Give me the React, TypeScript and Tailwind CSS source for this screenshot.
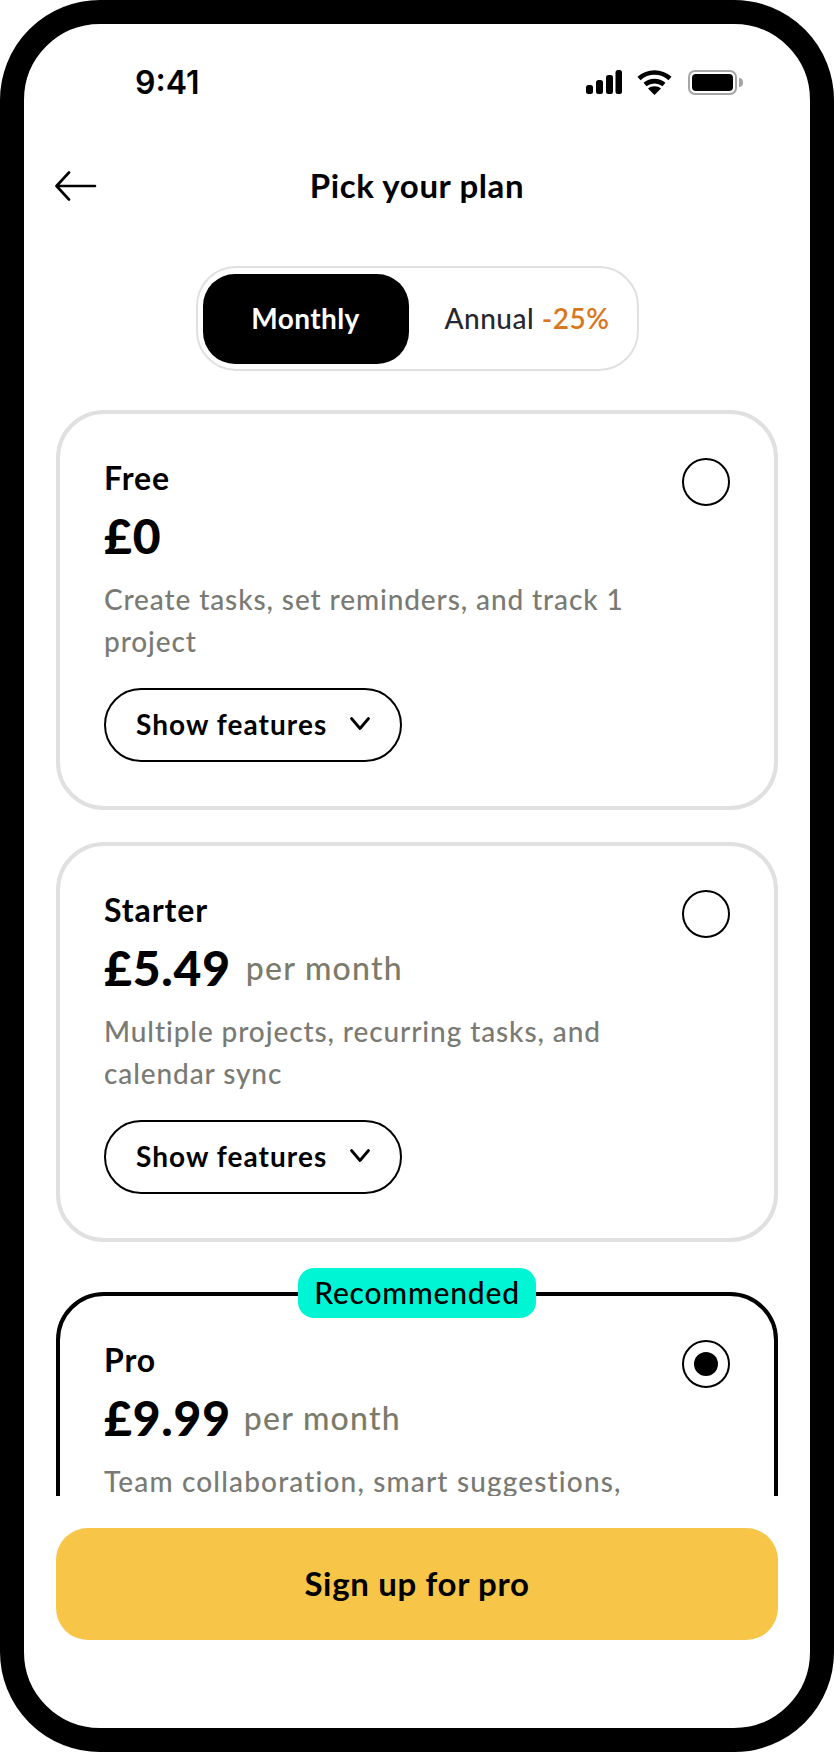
import React from "react";

const font = "font-['Lato','Open_Sans',sans-serif]";

function Radio({ selected }: { selected?: boolean }) {
    return (
        <div className="flex h-12 w-12 shrink-0 items-center justify-center rounded-full border-2 border-black">
            {selected && <div className="h-6 w-6 rounded-full bg-black" />}
        </div>
    );
}

function Chevron() {
    return (
        <svg width="22" height="16" viewBox="0 0 22 16" fill="none" stroke="black" strokeWidth="2.8" strokeLinecap="round" strokeLinejoin="round">
            <path d="M2.500 2.500l8.500 10 8.500-10" />
        </svg>
    );
}

type PlanProps = {
    name: string;
    price: string;
    period?: string;
    desc: string[];
    selected?: boolean;
    badge?: boolean;
    periodGap?: string;
    descTracking?: string;
};

function Plan({ name, price, period, desc, selected, badge, periodGap, descTracking }: PlanProps) {
    return (
        <div className={`relative h-[400px] shrink-0 rounded-[48px] border-4 pl-11 pr-11 pt-[46px] ${selected ? "border-black" : "border-[#e0e0e0]"}`}>
            {badge && (
                <div className="absolute left-[238px] top-[-28px] flex h-[50px] w-[238px] items-center justify-center rounded-2xl bg-[#00f5d4] pb-[2px] text-[30px] font-medium tracking-[0.8px] text-black">
                    Recommended
                </div>
            )}
            <div className="flex items-start justify-between">
                <div>
                    <div className="h-9 text-[32px] font-bold leading-9 tracking-[0.9px] text-black">{name}</div>
                    <div className="mt-[10px] flex h-[60px] items-center">
                        <span className="text-[48px] font-black leading-[60px] tracking-[0.8px] text-black">{price}</span>
                        {period && <span className={`${periodGap ?? "ml-[15px]"} text-[32px] font-medium tracking-[1.25px] text-[#7b7b6b]`}>{period}</span>}
                    </div>
                </div>
                <div className="-mt-[2px]">
                    <Radio selected={selected} />
                </div>
            </div>
            <div className={`mt-3 text-[28px] font-medium leading-[42px] ${descTracking ?? "tracking-[0.9px]"} text-[#7a7a74]`}>
                {desc.map((line) => (
                    <div key={line} className="whitespace-nowrap">{line}</div>
                ))}
            </div>
            <button className="mt-[26px] flex h-[74px] w-[298px] items-center gap-[22px] rounded-full border-2 border-black pb-[2px] pl-[30px] text-[28px] font-bold tracking-[1.05px] text-black">
                Show features
                <Chevron />
            </button>
        </div>
    );
}

export default function App() {
    return (
        <div className={`${font} h-[1752px] w-[834px] bg-white`}>
            <div className="flex h-full w-full flex-col overflow-hidden rounded-[100px] border-[24px] border-black bg-white">
                <div className="flex h-[1472px] shrink-0 flex-col overflow-hidden">
                    {/* status bar */}
                    <div className="mt-9 flex h-11 shrink-0 items-center justify-between pl-[111px] pr-[67px]">
                        <span className="pt-[2px] font-['Inter',sans-serif] text-[32px] font-semibold leading-none text-black">9:41</span>
                        <div className="flex items-center">
                            <svg width="36" height="24" viewBox="0 0 36 24" fill="black">
                                <rect x="0" y="15" width="7" height="9" rx="2.5" />
                                <rect x="10" y="10" width="7" height="14" rx="2.5" />
                                <rect x="20" y="5" width="7" height="19" rx="2.5" />
                                <rect x="29.5" y="0" width="6.5" height="24" rx="2.5" />
                            </svg>
                            <svg className="ml-[15px]" width="35" height="25" viewBox="0 0 35 25" fill="none" stroke="black" strokeWidth="4.6">
                                <path d="M2 8.500c9-8 22-8 31 0" />
                                <path d="M8 14.500c5.500-4.500 13.500-4.500 19 0" />
                                <path d="M17.500 25l-6.500-6.500c3.500-3 9.500-3 13 0z" fill="black" stroke="none" />
                            </svg>
                            <div className="ml-4 flex items-center">
                                <div className="h-[25px] w-[49px] rounded-[7px] border-2 border-[#a6a6a6] p-[2px]">
                                    <div className="h-full w-full rounded-[4px] bg-black" />
                                </div>
                                <div className="ml-[2px] h-[9px] w-1 rounded-r-full bg-[#a6a6a6]" />
                            </div>
                        </div>
                    </div>

                    {/* header */}
                    <div className="relative mt-[58px] flex h-12 shrink-0 items-center justify-center">
                        <svg className="absolute left-[31px] top-[9px]" width="42" height="30" viewBox="0 0 42 30" fill="none" stroke="black" strokeWidth="2.6" strokeLinecap="round" strokeLinejoin="round">
                            <path d="M40 15H2M14 1.500L1.500 15 14 28.500" />
                        </svg>
                        <h1 className="text-[33px] font-bold tracking-[0.6px] text-black">Pick your plan</h1>
                    </div>

                    {/* billing toggle */}
                    <div className="mt-[56px] flex shrink-0 justify-center">
                        <div className="flex h-[105px] w-[443px] items-center rounded-[40px] border-2 border-[#e0e0e0] pl-[5px]">
                            <div className="flex h-[90px] w-[206px] items-center justify-center rounded-[32px] bg-black pb-[2px] text-[28px] font-bold tracking-[0.4px] text-white">
                                Monthly
                            </div>
                            <div className="mb-[2px] ml-9 text-[28px] font-medium tracking-[0.5px] text-[#26262e]">
                                Annual <span className="font-semibold text-[#d9771e]">-25%</span>
                            </div>
                        </div>
                    </div>

                    {/* plans */}
                    <div className="mt-[39px] flex flex-col px-8">
                        <Plan name="Free" price="£0" desc={["Create tasks, set reminders, and track 1", "project"]} />
                        <div className="mt-8">
                            <Plan name="Starter" price="£5.49" period="per month" desc={["Multiple projects, recurring tasks, and", "calendar sync"]} />
                        </div>
                        <div className="mt-[50px]">
                            <Plan name="Pro" price="£9.99" period="per month" periodGap="ml-[13px]" descTracking="tracking-[1.15px]" selected badge desc={["Team collaboration, smart suggestions,", "and priority support"]} />
                        </div>
                    </div>
                </div>

                {/* cta */}
                <div className="mt-8 shrink-0 px-8">
                    <button className="flex h-[112px] w-full items-center justify-center rounded-[32px] bg-[#f7c548] text-[33px] font-bold tracking-[0.65px] text-black">
                        Sign up for pro
                    </button>
                </div>
            </div>
        </div>
    );
}
